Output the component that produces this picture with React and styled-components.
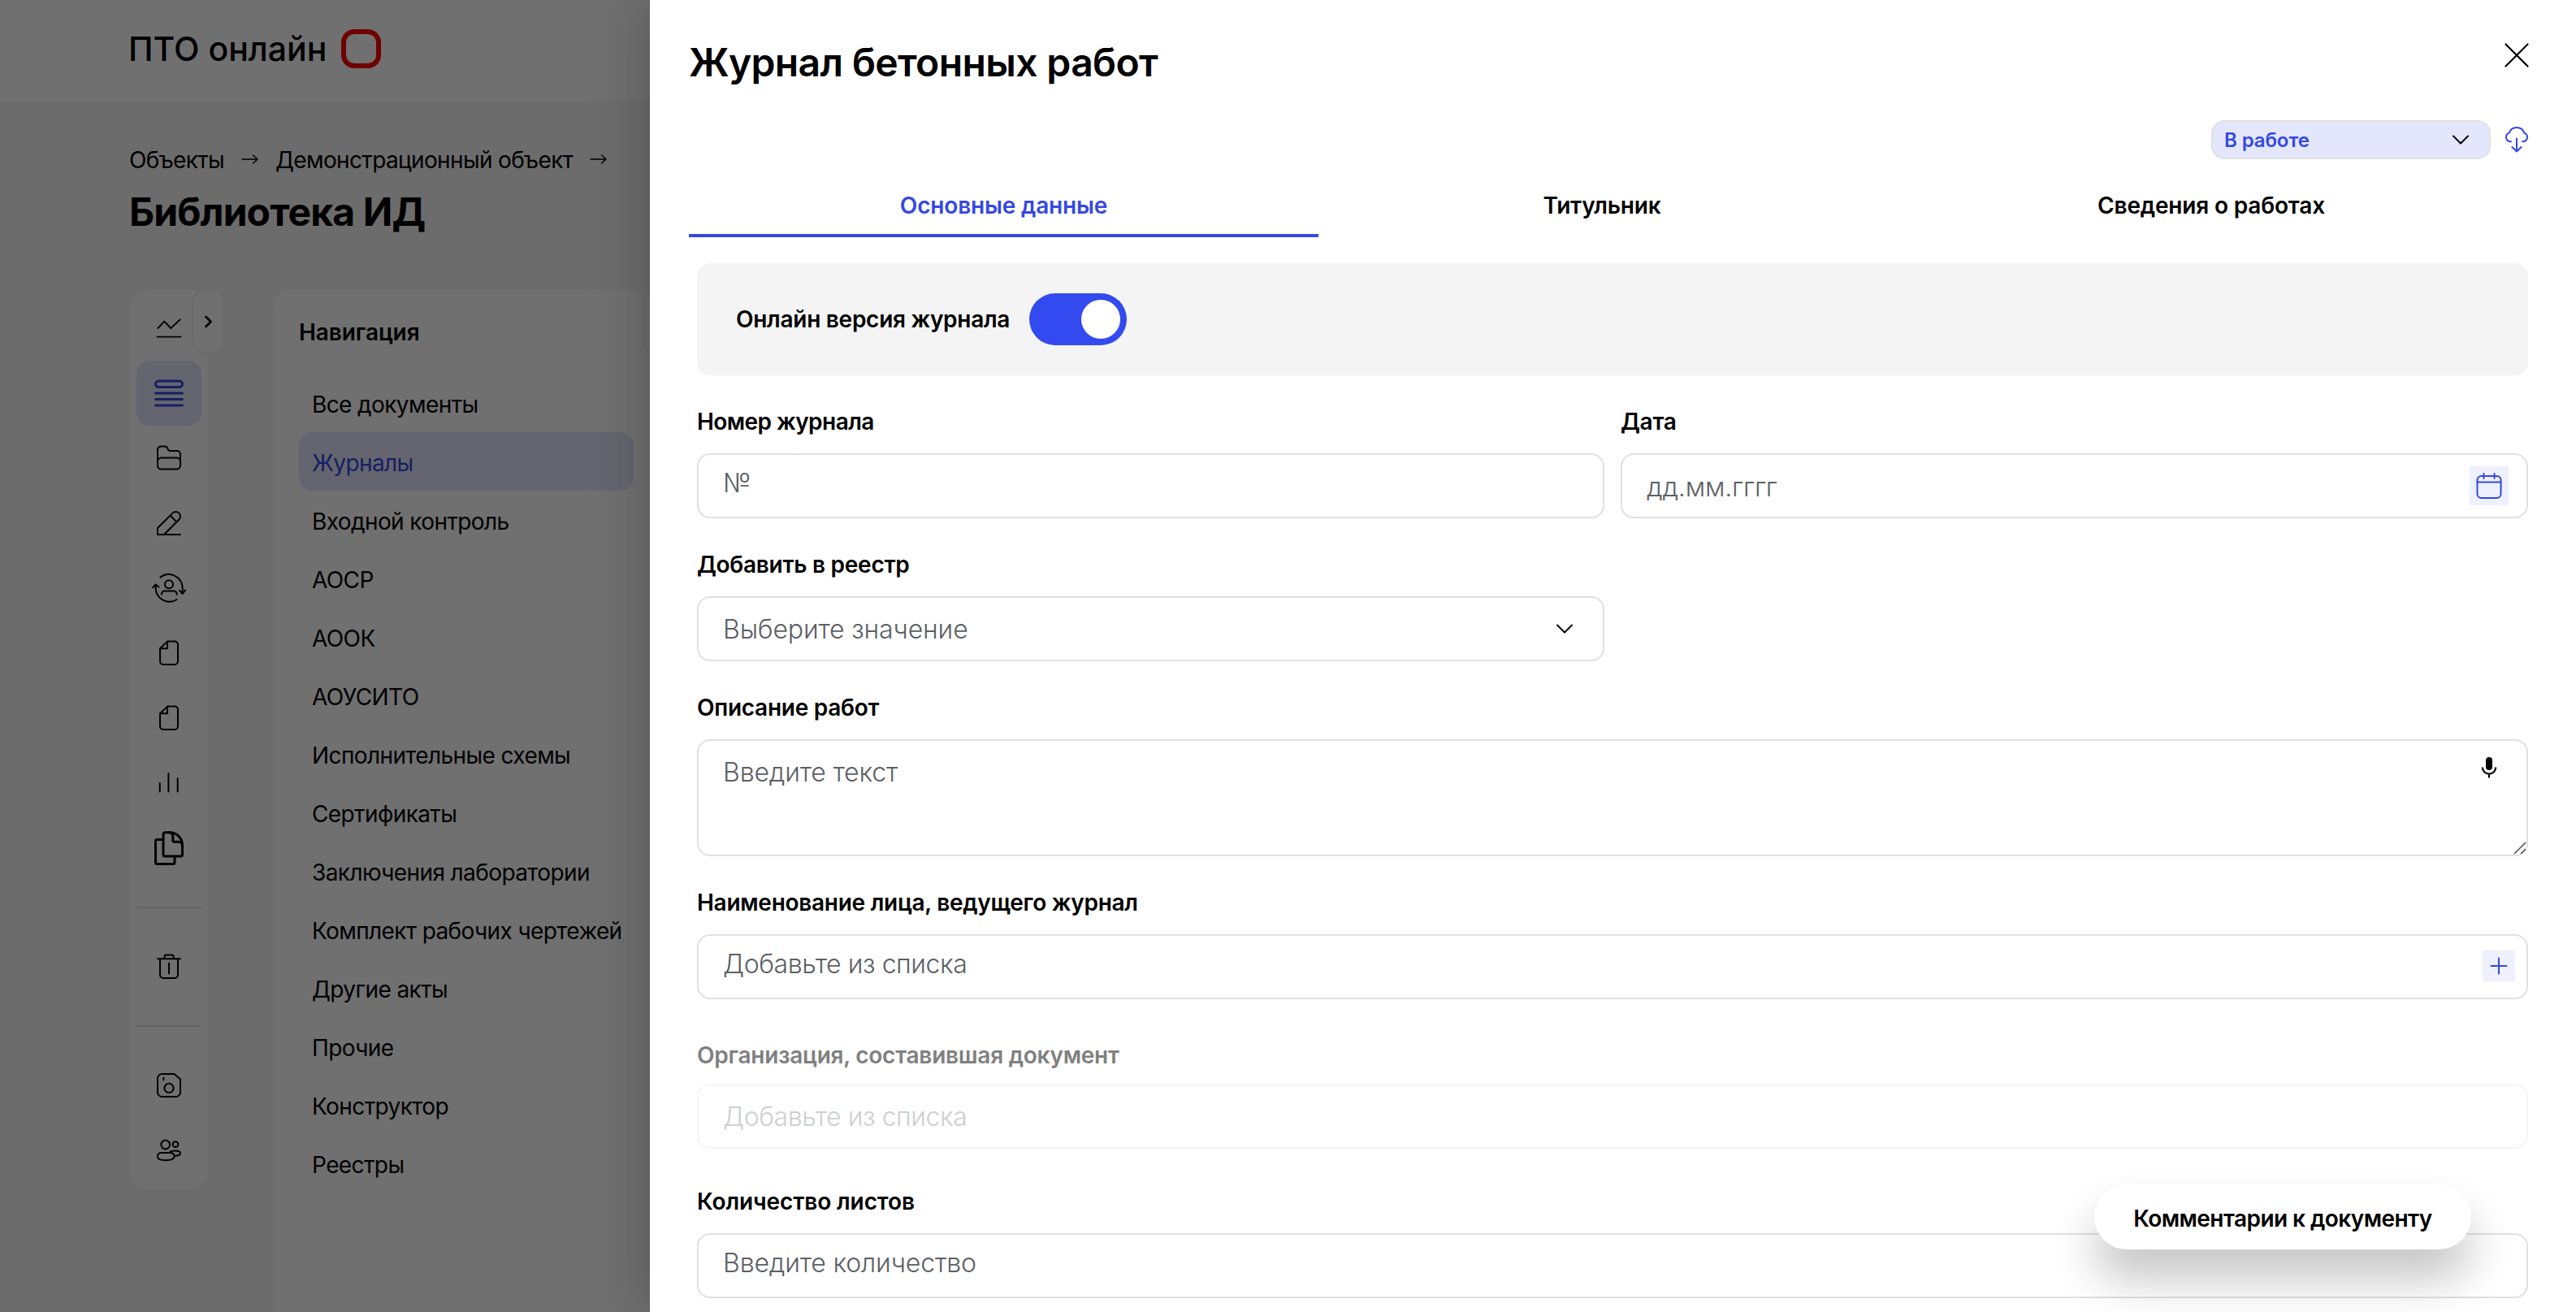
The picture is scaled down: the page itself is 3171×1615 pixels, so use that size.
import React from "react";
import styled, { createGlobalStyle, css } from "styled-components";

const BLUE = "#3548e4";

const GlobalStyle = createGlobalStyle`
  *, *::before, *::after { box-sizing: border-box; }
  html, body { margin: 0; padding: 0; }
  body {
    font-family: Inter, "Open Sans", "Liberation Sans", sans-serif;
    font-size: 28px;
    color: #000;
    overflow: hidden;
  }
`;

const Screen = styled.div`
  position: relative;
  width: 100vw;
  height: 100vh;
  overflow: hidden;
  background: #f5f5f5;
`;

/* ---------- page under the drawer ---------- */

const Page = styled.div`
  display: flex;
  flex-direction: column;
  height: 100%;
`;

const TopBar = styled.header`
  display: flex;
  align-items: center;
  gap: 18px;
  height: 124px;
  padding: 0 158px 4px;
  background: #fff;
`;

const Brand = styled.span`
  font-size: 41px;
  line-height: 50px;
  font-weight: 550;
  letter-spacing: 0;
  white-space: nowrap;
`;

const BrandMark = styled.span`
  width: 49px;
  height: 48px;
  border: 6px solid #ff0000;
  border-radius: 16px;
`;

const PageHead = styled.div`
  display: flex;
  flex-direction: column;
  padding: 53px 159px 0;
  height: 232px;
`;

const Crumbs = styled.nav`
  display: flex;
  align-items: center;
  gap: 21px;
  height: 40px;
  white-space: nowrap;
`;

const Crumb = styled.span`
  font-size: 28px;
  line-height: 40px;
  font-weight: 400;
  letter-spacing: -0.65px;
`;

const PageTitle = styled.h1`
  margin: 13px 0 0;
  font-size: 48px;
  line-height: 62px;
  font-weight: 700;
  letter-spacing: -0.9px;
  white-space: nowrap;
`;

const Columns = styled.div`
  display: flex;
  align-items: flex-start;
  gap: 80px;
  padding-left: 160px;
  flex: 1;
`;

const Rail = styled.aside`
  position: relative;
  display: flex;
  flex-direction: column;
  width: 96px;
  padding: 8px;
  background: #fff;
  border-radius: 24px;
`;

const RailItem = styled.div`
  display: flex;
  align-items: center;
  justify-content: center;
  width: 80px;
  height: 80px;
  border-radius: 16px;
  color: ${(p) => (p.$active ? BLUE : "#000")};
  background: ${(p) => (p.$active ? "#e4e6fb" : "transparent")};
`;

const RailDivider = styled.hr`
  width: 80px;
  height: 2px;
  margin: 32px 0;
  border: 0;
  background: #e2e2e2;
`;

const EdgeTab = styled.div`
  position: absolute;
  top: 0;
  right: -20px;
  display: flex;
  align-items: center;
  justify-content: center;
  width: 40px;
  height: 80px;
  background: #fff;
  border: 2px solid #f2f2f2;
  border-radius: 16px;
`;

const NavCard = styled.section`
  position: relative;
  width: 476px;
  height: 100%;
  padding: 31px 32px;
  background: #fff;
  border-radius: 24px 24px 0 0;
`;

const NavTitle = styled.h2`
  margin: 0 0 29px;
  font-size: 28px;
  line-height: 44px;
  font-weight: 600;
  letter-spacing: -0.1px;
`;

const NavItem = styled.div`
  display: flex;
  align-items: center;
  height: 72px;
  padding: 3px 16px 0;
  border-radius: 16px;
  font-size: 28px;
  letter-spacing: -0.6px;
  white-space: nowrap;
  color: ${(p) => (p.$active ? BLUE : "#000")};
  background: ${(p) => (p.$active ? "#e4e6fb" : "transparent")};
`;

const Backdrop = styled.div`
  position: absolute;
  inset: 0;
  background: rgba(0, 0, 0, 0.56);
`;

/* ---------- drawer ---------- */

const Drawer = styled.main`
  position: absolute;
  top: 0;
  right: 0;
  bottom: 0;
  left: 800px;
  padding: 0 48px;
  background: #fff;
  box-shadow: 0 0 64px rgba(0, 0, 0, 0.25);
`;

const DrawerHead = styled.div`
  display: flex;
  align-items: flex-start;
  justify-content: space-between;
  height: 148px;
  padding: 47px 9px 0 0;
`;

const DrawerTitle = styled.h1`
  margin: 0;
  font-size: 48px;
  line-height: 60px;
  font-weight: 600;
  letter-spacing: -0.63px;
  white-space: nowrap;
`;

const CloseButton = styled.button`
  display: flex;
  margin-top: 5px;
  padding: 0;
  border: 0;
  background: none;
`;

const StatusRow = styled.div`
  display: flex;
  align-items: center;
  justify-content: flex-end;
  gap: 16px;
  height: 48px;
  padding-right: 9px;
`;

const StatusSelect = styled.div`
  display: flex;
  align-items: center;
  justify-content: space-between;
  width: 344px;
  height: 48px;
  padding: 0 24px 0 14px;
  border: 2px solid #e0e0e0;
  border-radius: 16px;
  background: #e4e7fc;
  color: ${BLUE};
  font-size: 24px;
  font-weight: 600;
  letter-spacing: -0.1px;
`;

const Tabs = styled.div`
  display: flex;
  margin-top: 16px;
  height: 80px;
`;

const Tab = styled.div`
  display: flex;
  align-items: center;
  justify-content: center;
  flex: ${(p) => p.$grow} 1 0;
  padding-top: 6px;
  border-bottom: 4px solid ${(p) => (p.$active ? BLUE : "transparent")};
  color: ${(p) => (p.$active ? BLUE : "#000")};
  font-size: 28px;
  font-weight: 600;
  letter-spacing: -0.17px;
  white-space: nowrap;
`;

const Form = styled.div`
  display: flex;
  flex-direction: column;
  margin-top: 32px;
  padding: 0 11px 0 10px;
`;

const ToggleCard = styled.div`
  display: flex;
  align-items: center;
  gap: 24px;
  height: 138px;
  padding: 0 48px;
  border-radius: 16px;
  background: #f4f4f4;
`;

const labelText = css`
  font-size: 28px;
  line-height: 40px;
  font-weight: 600;
  letter-spacing: ${(p) => p.$track || "-0.27px"};
  white-space: nowrap;
`;

const ToggleLabel = styled.span`
  ${labelText}
`;

const Switch = styled.span`
  display: flex;
  align-items: center;
  justify-content: flex-end;
  width: 120px;
  height: 64px;
  padding: 8px;
  border-radius: 32px;
  background: #334af0;
`;

const Knob = styled.span`
  width: 48px;
  height: 48px;
  border-radius: 50%;
  background: #fff;
`;

const Row = styled.div`
  display: grid;
  grid-template-columns: ${(p) => (p.$two ? "1fr 1fr" : "1fr")};
  column-gap: 20px;
  margin-top: ${(p) => p.$top || 37}px;
`;

const Field = styled.div`
  display: flex;
  flex-direction: column;
  gap: ${(p) => p.$gap || 19}px;
`;

const Label = styled.label`
  ${labelText}
  color: ${(p) => (p.$muted ? "#808080" : "#000")};
`;

const Control = styled.div`
  position: relative;
  display: flex;
  align-items: ${(p) => (p.$area ? "flex-start" : "center")};
  justify-content: space-between;
  height: ${(p) => (p.$area ? 144 : 80)}px;
  padding: ${(p) => (p.$area ? "17px" : "0")} ${(p) => p.$right || 22}px 0 30px;
  border: 2px solid ${(p) => (p.$muted ? "#f5f5f5" : "#e0e0e0")};
  border-radius: 16px;
  background: #fff;
`;

const Placeholder = styled.span`
  margin-top: ${(p) => p.$drop || 0}px;
  margin-bottom: ${(p) => p.$lift || 0}px;
  color: ${(p) => (p.$muted ? "#cdcfd0" : "#5b6064")};
  font-size: 32px;
  line-height: 44px;
  font-weight: 300;
  letter-spacing: ${(p) => p.$track || "-0.15px"};
  white-space: nowrap;
`;

const IconTile = styled.span`
  display: flex;
  align-items: center;
  justify-content: center;
  width: ${(p) => p.$w}px;
  height: ${(p) => p.$h}px;
  margin-top: ${(p) => p.$drop || 0}px;
  background: #eef0fd;
  color: ${BLUE};
`;

const Grip = styled.svg`
  position: absolute;
  right: 0;
  bottom: 0;
`;

const CommentsButton = styled.button`
  position: absolute;
  right: 129px;
  bottom: 77px;
  width: 464px;
  height: 80px;
  padding: 3px 0 0;
  border: 0;
  border-radius: 40px;
  background: #fff;
  box-shadow: 0 36px 56px rgba(0, 0, 0, 0.23);
  font-family: inherit;
  font-size: 28px;
  font-weight: 600;
  letter-spacing: -0.55px;
  color: #000;
`;

/* ---------- icons ---------- */

const Svg = styled.svg`
  display: block;
  flex: none;
  overflow: visible;
  fill: none;
  stroke: currentColor;
  stroke-linecap: round;
  stroke-linejoin: round;
`;

const MicSvg = styled(Svg)`
  margin-top: 2px;
`;

const RailIcon = ({ w = 2, children }) => (
  <Svg width="40" height="40" viewBox="0 0 40 40" strokeWidth={w}>
    {children}
  </Svg>
);

const IconTrend = () => (
  <RailIcon w={1.9}>
    <path d="M6.3 20 14.3 11.6 22.3 20 33.7 9.4M5.6 30.6H34.4" />
  </RailIcon>
);
const IconList = () => (
  <RailIcon w={3}>
    <rect x="3.5" y="5" width="33" height="7.6" rx="3.8" />
    <path d="M3.5 20h33M3.5 27.5h33M3.5 35h33" />
  </RailIcon>
);
const IconFolder = () => (
  <RailIcon>
    <path d="M6 24V9.6a4 4 0 0 1 4-4h5.4q1.8 0 2.5 1.6l1.1 2.3q.7 1.5 2.3 1.5H30a4 4 0 0 1 4 4V24" />
    <rect x="6" y="19.6" width="28" height="14" rx="4.5" />
  </RailIcon>
);
const IconPencil = () => (
  <RailIcon>
    <path d="M34 34H6V26L24.5 7.6a5.6 5.6 0 0 1 7.9 0a5.6 5.6 0 0 1 0 7.9L14 34M21.5 10.6 29.4 18.5" />
  </RailIcon>
);
const IconUserCycle = () => (
  <RailIcon>
    <path d="M9.3 6.6A17 17 0 0 1 36.7 20V27M33 22.8 36.7 27 40.2 22.4M29.6 34A17 17 0 0 1 3.6 20V15.4M.2 19.2 3.6 15.4 7.4 18.6" />
    <circle cx="20" cy="15.3" r="5" />
    <path d="M11 27.8v-.8a3.6 3.6 0 0 1 3.6-3.6h11.4a3.6 3.6 0 0 1 3.6 3.6v.8" />
  </RailIcon>
);
const IconDoc = () => (
  <RailIcon>
    <path d="M18 5.6H27a4 4 0 0 1 4 4V30a4 4 0 0 1-4 4H13a4 4 0 0 1-4-4V14.2L18 5.6V14.2H9" />
  </RailIcon>
);
const IconBars = () => (
  <RailIcon>
    <path d="M8.7 20V30.4M19.4 8V30.4M30.7 14V30.4" />
  </RailIcon>
);
const IconCopies = () => (
  <RailIcon w={3}>
    <path d="M21 .7H15a2 2 0 0 0-2 2V28a2 2 0 0 0 2 2H34.5a2 2 0 0 0 2-2V16.5C36.5 7.8 29.6.7 21 .7Z" />
    <path d="M20 .7c3 0 4.8 2 4.8 5v4.6a2 2 0 0 0 2 2h4.7c3 0 5 1.8 5 4.8" />
    <path d="M13 9.5H5.5a2 2 0 0 0-2 2V37.5a2 2 0 0 0 2 2H25a2 2 0 0 0 2-2V30" />
  </RailIcon>
);
const IconTrash = () => (
  <RailIcon>
    <path d="M6 10.2H34M14.5 10V8a2.4 2.4 0 0 1 2.4-2.4h6.4A2.4 2.4 0 0 1 25.7 8V10M9 10.2V30a4 4 0 0 0 4 4H27a4 4 0 0 0 4-4V10.2M20 15.5V28.5" />
  </RailIcon>
);
const IconDisk = () => (
  <RailIcon>
    <path d="M11.5 6H26.5L34 12.5V28.5a5.5 5.5 0 0 1-5.5 5.5H11.5A5.5 5.5 0 0 1 6 28.5V11.5A5.5 5.5 0 0 1 11.5 6Z" />
    <circle cx="20" cy="23.4" r="5.6" />
    <path d="M13.4 10.8V13.6" />
  </RailIcon>
);
const IconPeople = () => (
  <RailIcon>
    <circle cx="15.7" cy="13" r="5.4" />
    <circle cx="28" cy="12.7" r="3.4" />
    <path d="M10.5 23H21.5C25 23 26.6 25 26.6 27.5C26.6 30.5 22 32.2 16 32.2S6 30.8 6 28C6 25 7.5 23 10.5 23Z" />
    <path d="M21 22.4C22 21.2 25 20.6 28 20.6C32 20.6 34 21.6 34 23.6C34 26 31 26.6 26.8 26.4" />
  </RailIcon>
);
const IconChevronRight = () => (
  <Svg width="16" height="16" viewBox="0 0 16 16" strokeWidth="2.6">
    <path d="M5.5 2 11.5 8 5.5 14" />
  </Svg>
);
const IconArrow = () => (
  <Svg width="21" height="16" viewBox="0 0 21 16" strokeWidth="1.4">
    <path d="M1 7H20M14.5 2 20 7 14.5 12" />
  </Svg>
);
const IconClose = () => (
  <Svg width="32" height="32" viewBox="0 0 32 32" strokeWidth="2.2">
    <path d="M2.500 2.500 29.500 29.500M29.500 2.500 2.500 29.500" />
  </Svg>
);
const IconCloud = () => (
  <Svg width="32" height="32" viewBox="0 0 32 32" strokeWidth="2" color={BLUE}>
    <path d="M9 18.200H7.400A5.500 5.500 0 0 1 6.700 7.600A9.800 9.800 0 0 1 25.300 7.600A5.500 5.500 0 0 1 24.600 18.200H23M16 14.500V30.500M10.400 25 16 30.500 21.600 25" />
  </Svg>
);
const IconChevronDown = () => (
  <Svg width="22" height="14" viewBox="0 0 22 14" strokeWidth="2" color="#000">
    <path d="M2 2.500 11 11.500 20 2.500" />
  </Svg>
);
const IconCalendar = () => (
  <Svg width="32" height="32" viewBox="0 0 32 32" strokeWidth="2">
    <rect x="1.500" y="4" width="29" height="27" rx="5" />
    <path d="M1.500 11.500H30.500M9.500 1V7M22.500 1V7" />
  </Svg>
);
const IconMic = () => (
  <MicSvg width="20" height="28" viewBox="0 0 20 28" strokeWidth="2.2">
    <rect x="6" y="1" width="8" height="16" rx="4" fill="#000" stroke="none" />
    <path d="M1.800 13.500a8.200 8.200 0 0 0 16.400 0M10 21.700V26.500" strokeLinecap="butt" />
  </MicSvg>
);
const IconPlus = () => (
  <Svg width="22" height="22" viewBox="0 0 22 22" strokeWidth="2">
    <path d="M11 1.500V20.500M1.500 11H20.500" />
  </Svg>
);

/* ---------- data ---------- */

const RAIL = [
  [IconTrend, IconList, IconFolder, IconPencil, IconUserCycle, IconDoc, IconDoc, IconBars, IconCopies],
  [IconTrash],
  [IconDisk, IconPeople],
];

const NAV = [
  "Все документы",
  "Журналы",
  "Входной контроль",
  "АОСР",
  "АООК",
  "АОУСИТО",
  "Исполнительные схемы",
  "Сертификаты",
  "Заключения лаборатории",
  "Комплект рабочих чертежей",
  "Другие акты",
  "Прочие",
  "Конструктор",
  "Реестры",
];

const TABS = [
  { title: "Основные данные", grow: 775 },
  { title: "Титульник", grow: 698 },
  { title: "Сведения о работах", grow: 802 },
];

export default function App() {
  return (
    <>
      <GlobalStyle />
      <Screen>
        <Page>
          <TopBar>
            <Brand>ПТО онлайн</Brand>
            <BrandMark />
          </TopBar>
          <PageHead>
            <Crumbs>
              <Crumb>Объекты</Crumb>
              <IconArrow />
              <Crumb>Демонстрационный объект</Crumb>
              <IconArrow />
            </Crumbs>
            <PageTitle>Библиотека ИД</PageTitle>
          </PageHead>
          <Columns>
            <Rail>
              {RAIL.map((group, g) => (
                <React.Fragment key={g}>
                  {g > 0 && <RailDivider />}
                  {group.map((Icon, i) => (
                    <RailItem key={i} $active={g === 0 && i === 1}>
                      <Icon />
                    </RailItem>
                  ))}
                </React.Fragment>
              ))}
              <EdgeTab>
                <IconChevronRight />
              </EdgeTab>
            </Rail>
            <NavCard>
              <NavTitle>Навигация</NavTitle>
              {NAV.map((item, i) => (
                <NavItem key={item} $active={i === 1}>
                  {item}
                </NavItem>
              ))}
              <EdgeTab />
            </NavCard>
          </Columns>
        </Page>
        <Backdrop />
        <Drawer>
          <DrawerHead>
            <DrawerTitle>Журнал бетонных работ</DrawerTitle>
            <CloseButton>
              <IconClose />
            </CloseButton>
          </DrawerHead>
          <StatusRow>
            <StatusSelect>
              В работе
              <IconChevronDown />
            </StatusSelect>
            <IconCloud />
          </StatusRow>
          <Tabs>
            {TABS.map((tab, i) => (
              <Tab key={tab.title} $grow={tab.grow} $active={i === 0}>
                {tab.title}
              </Tab>
            ))}
          </Tabs>
          <Form>
            <ToggleCard>
              <ToggleLabel>Онлайн версия журнала</ToggleLabel>
              <Switch>
                <Knob />
              </Switch>
            </ToggleCard>
            <Row $two>
              <Field>
                <Label $track="-0.55px">Номер журнала</Label>
                <Control>
                  <Placeholder $lift={7}>№</Placeholder>
                </Control>
              </Field>
              <Field>
                <Label>Дата</Label>
                <Control>
                  <Placeholder $drop={3}>дд.мм.гггг</Placeholder>
                  <IconTile $w={48} $h={48}>
                    <IconCalendar />
                  </IconTile>
                </Control>
              </Field>
            </Row>
            <Row $two>
              <Field>
                <Label>Добавить в реестр</Label>
                <Control $right={36}>
                  <Placeholder $drop={2}>Выберите значение</Placeholder>
                  <IconChevronDown />
                </Control>
              </Field>
            </Row>
            <Row>
              <Field>
                <Label>Описание работ</Label>
                <Control $area $right={36}>
                  <Placeholder>Введите текст</Placeholder>
                  <IconMic />
                  <Grip width="16" height="16" viewBox="0 0 16 16" stroke="#555" strokeWidth="1.6">
                    <path d="M1 15 15 1M9 15 15 9" />
                  </Grip>
                </Control>
              </Field>
            </Row>
            <Row>
              <Field>
                <Label>Наименование лица, ведущего журнал</Label>
                <Control $right={14}>
                  <Placeholder $lift={7} $track="-0.42px">
                    Добавьте из списка
                  </Placeholder>
                  <IconTile $w={40} $h={38} $drop={-2}>
                    <IconPlus />
                  </IconTile>
                </Control>
              </Field>
            </Row>
            <Row $top={49}>
              <Field $gap={15}>
                <Label $muted $track="-0.24px">
                  Организация, составившая документ
                </Label>
                <Control $muted>
                  <Placeholder $muted $drop={2} $track="-0.42px">
                    Добавьте из списка
                  </Placeholder>
                </Control>
              </Field>
            </Row>
            <Row $top={45}>
              <Field>
                <Label $track="-0.1px">Количество листов</Label>
                <Control>
                  <Placeholder $lift={7}>Введите количество</Placeholder>
                </Control>
              </Field>
            </Row>
          </Form>
          <CommentsButton>Комментарии к документу</CommentsButton>
        </Drawer>
      </Screen>
    </>
  );
}
